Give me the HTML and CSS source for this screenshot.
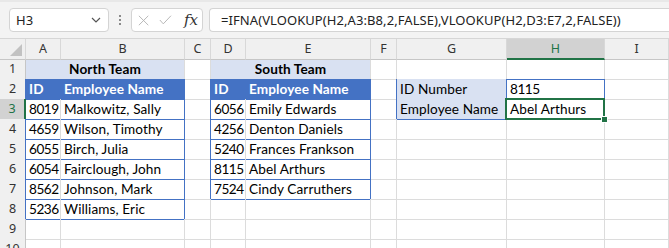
FILE: index.html
```html
<!DOCTYPE html>
<html lang="en">
<head>
    <meta charset="UTF-8">
    <title>Sheet</title>
    <link rel="stylesheet" href="styles.css">
</head>
<body>
    <div class="bar">
        <div class="namebox">
            <span>H3</span>
            <svg class="chev" width="10" height="6" viewBox="0 0 10 6"><polyline points="1,1 5,5 9,1" fill="none" stroke="#555" stroke-width="1.2"/></svg>
        </div>
        <div class="dots"><i></i><i></i><i></i></div>
        <div class="fxbox">
            <svg width="13" height="13" viewBox="0 0 13 13"><path d="M1 1 L12 12 M12 1 L1 12" stroke="#b4b4b4" stroke-width="1.1" fill="none"/></svg>
            <svg width="15" height="12" viewBox="0 0 15 12"><polyline points="1,6 5,10.5 14,1" stroke="#b4b4b4" stroke-width="1.1" fill="none"/></svg>
            <span class="fx">fx</span>
        </div>
        <div class="formula">=IFNA(VLOOKUP(H2,A3:B8,2,FALSE),VLOOKUP(H2,D3:E7,2,FALSE))</div>
    </div>

    <div class="sheet">
        <div class="row head">
            <div class="ch corner"></div>
            <div class="ch">A</div>
            <div class="ch">B</div>
            <div class="ch">C</div>
            <div class="ch">D</div>
            <div class="ch">E</div>
            <div class="ch">F</div>
            <div class="ch">G</div>
            <div class="ch on">H</div>
            <div class="ch">I</div>
        </div>
        <div class="row">
            <div class="rh">1</div>
            <div class="c title wide bb">North Team</div>
            <div class="c"></div>
            <div class="c title wide bb">South Team</div>
            <div class="c"></div>
            <div class="c bb"></div>
            <div class="c bb"></div>
            <div class="c"></div>
        </div>
        <div class="row">
            <div class="rh br">2</div>
            <div class="c hd">ID</div>
            <div class="c hd">Employee Name</div>
            <div class="c br"></div>
            <div class="c hd">ID</div>
            <div class="c hd">Employee Name</div>
            <div class="c br"></div>
            <div class="c lb bb br">ID Number</div>
            <div class="c bb br num">8115</div>
            <div class="c"></div>
        </div>
        <div class="row">
            <div class="rh on">3</div>
            <div class="c bb num">8019</div>
            <div class="c bb br">Malkowitz, Sally</div>
            <div class="c br"></div>
            <div class="c bb num">6056</div>
            <div class="c bb br">Emily Edwards</div>
            <div class="c br"></div>
            <div class="c lb bb br">Employee Name</div>
            <div class="c bb br sel">Abel Arthurs</div>
            <div class="c"></div>
        </div>
        <div class="row">
            <div class="rh br">4</div>
            <div class="c bb num">4659</div>
            <div class="c bb br">Wilson, Timothy</div>
            <div class="c br"></div>
            <div class="c bb num">4256</div>
            <div class="c bb br">Denton Daniels</div>
            <div class="c"></div>
            <div class="c"></div>
            <div class="c"></div>
            <div class="c"></div>
        </div>
        <div class="row">
            <div class="rh br">5</div>
            <div class="c bb num">6055</div>
            <div class="c bb br">Birch, Julia</div>
            <div class="c br"></div>
            <div class="c bb num">5240</div>
            <div class="c bb br">Frances Frankson</div>
            <div class="c"></div>
            <div class="c"></div>
            <div class="c"></div>
            <div class="c"></div>
        </div>
        <div class="row">
            <div class="rh br">6</div>
            <div class="c bb num">6054</div>
            <div class="c bb br">Fairclough, John</div>
            <div class="c br"></div>
            <div class="c bb num">8115</div>
            <div class="c bb br">Abel Arthurs</div>
            <div class="c"></div>
            <div class="c"></div>
            <div class="c"></div>
            <div class="c"></div>
        </div>
        <div class="row">
            <div class="rh br">7</div>
            <div class="c bb num">8562</div>
            <div class="c bb br">Johnson, Mark</div>
            <div class="c br"></div>
            <div class="c bb num">7524</div>
            <div class="c bb br">Cindy Carruthers</div>
            <div class="c"></div>
            <div class="c"></div>
            <div class="c"></div>
            <div class="c"></div>
        </div>
        <div class="row">
            <div class="rh br">8</div>
            <div class="c bb num">5236</div>
            <div class="c bb br">Williams, Eric</div>
            <div class="c"></div>
            <div class="c"></div>
            <div class="c"></div>
            <div class="c"></div>
            <div class="c"></div>
            <div class="c"></div>
            <div class="c"></div>
        </div>
        <div class="row">
            <div class="rh">9</div>
            <div class="c"></div>
            <div class="c"></div>
            <div class="c"></div>
            <div class="c"></div>
            <div class="c"></div>
            <div class="c"></div>
            <div class="c"></div>
            <div class="c"></div>
            <div class="c"></div>
        </div>
        <div class="row">
            <div class="rh">10</div>
            <div class="c"></div>
            <div class="c"></div>
            <div class="c"></div>
            <div class="c"></div>
            <div class="c"></div>
            <div class="c"></div>
            <div class="c"></div>
            <div class="c"></div>
            <div class="c"></div>
        </div>
    </div>
</body>
</html>
```

FILE: styles.css
```css
html, body {
    margin: 0;
    padding: 0;
    background: #fff;
}
body {
    width: 669px;
    height: 248px;
    overflow: hidden;
}

/* formula bar */
.bar {
    height: 39px;
    box-sizing: border-box;
    background: #f3f3f3;
    border-top: 2px solid #e8e8e8;
    border-bottom: 1px solid #d6d6d6;
    display: flex;
    align-items: center;
    padding: 0 0 0 9px;
    font-family: "Noto Sans", "Open Sans", sans-serif;
    color: #222;
}
.namebox {
    width: 100px;
    height: 24px;
    box-sizing: border-box;
    background: #fff;
    border: 1px solid #d4d4d4;
    border-radius: 4px;
    display: flex;
    align-items: center;
    justify-content: space-between;
    padding: 0 7px 0 6px;
    font-size: 13px;
}
.dots {
    width: 22px;
    display: flex;
    flex-direction: column;
    align-items: center;
    gap: 2px;
}
.dots i {
    width: 2px;
    height: 2px;
    background: #8a8a8a;
}
.fxbox {
    width: 72px;
    height: 24px;
    box-sizing: border-box;
    background: #fff;
    border: 1px solid #d4d4d4;
    border-radius: 4px;
    display: flex;
    align-items: center;
    gap: 10px;
    padding: 0 4px 0 6px;
}
.fx {
    font-family: "DejaVu Serif", "Liberation Serif", serif;
    font-style: italic;
    font-size: 15px;
    color: #333;
    margin-left: 2px;
}
.formula {
    flex: 1;
    height: 24px;
    box-sizing: border-box;
    margin-left: 6px;
    background: #fff;
    border: 1px solid #d4d4d4;
    border-right: none;
    border-radius: 4px 0 0 4px;
    padding-left: 11px;
    line-height: 22px;
    font-size: 13px;
    letter-spacing: 0.08px;
    white-space: nowrap;
}

/* grid */
.sheet {
    font-family: Lato, "Noto Sans", sans-serif;
    font-size: 13.6px;
    letter-spacing: 0.1px;
    color: #000;
}
.row {
    display: grid;
    grid-template-columns: 26px 35px 124px 26px 35px 125px 26px 110px 98px 1fr;
    height: 20px;
}
.head {
    font-family: "Noto Sans", "Open Sans", sans-serif;
    font-size: 12.5px;
    letter-spacing: 0;
    color: #333;
}
.ch {
    background: #f0f0f0;
    border-right: 1px solid #d8d8d8;
    border-bottom: 1px solid #c6c6c6;
    text-align: center;
    line-height: 19px;
    position: relative;
}
.ch.on {
    background: #d2d2d2;
    color: #217346;
    border-bottom: 2px solid #217346;
}
.corner::after {
    content: "";
    position: absolute;
    right: 3px;
    bottom: 3px;
    border-style: solid;
    border-width: 0 0 12px 12px;
    border-color: transparent transparent #c2c2c2 transparent;
}
.rh {
    background: #f0f0f0;
    border-right: 1px solid #c6c6c6;
    border-bottom: 1px solid #d8d8d8;
    text-align: center;
    line-height: 20px;
    font-family: "Noto Sans", "Open Sans", sans-serif;
    font-size: 12.5px;
    letter-spacing: 0;
    color: #333;
}
.rh.on {
    background: #d2d2d2;
    color: #217346;
    border-right: 2px solid #217346;
}
.c {
    border-right: 1px solid #dcdcdc;
    border-bottom: 1px solid #dcdcdc;
    padding: 1px 3px 0;
    line-height: 19px;
    white-space: nowrap;
    overflow: hidden;
}
.c.num {
    letter-spacing: -0.5px;
}
.rh.br, .c.br {
    border-right-color: #4472c4;
}
.c.bb {
    border-bottom-color: #4472c4;
}
.wide {
    grid-column: span 2;
}
.title {
    background: #d9e1f2;
    border-right-color: #dcdcdc;
    font-weight: bold;
    text-align: center;
}
.hd {
    background: #4472c4;
    color: #fff;
    font-weight: bold;
    border-right-color: #4472c4;
    border-bottom-color: #4472c4;
}
.lb {
    background: #d9e1f2;
}
.sel {
    position: relative;
    overflow: visible;
}
.sel::before {
    content: "";
    position: absolute;
    left: -2px;
    top: -1px;
    right: -1px;
    bottom: -1px;
    border: 2px solid #217346;
}
.sel::after {
    content: "";
    position: absolute;
    right: -4px;
    bottom: -4px;
    width: 5px;
    height: 5px;
    background: #217346;
    border: 1px solid #fff;
}
```
